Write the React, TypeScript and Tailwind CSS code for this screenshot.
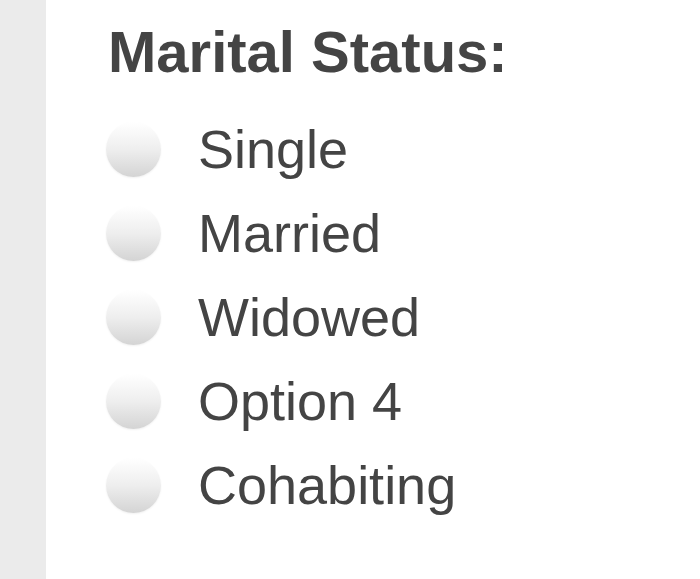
import React from 'react';

const options = ['Single', 'Married', 'Widowed', 'Option 4', 'Cohabiting'];

export default function App() {
  return (
    <div className="flex h-[579px] w-[700px] bg-white font-['Liberation_Sans',Arial,sans-serif] text-[#444]">
      <div className="w-[46px] shrink-0 bg-[#ebebeb]" />
      <div className="flex flex-col pl-[60px] pt-[23px]">
        <h2 className="ml-[2px] text-[58px] font-bold leading-none">Marital Status:</h2>
        <ul className="mt-[26px] flex flex-col">
          {options.map(o => (
            <li key={o} className="flex h-[84px] items-center">
              <span className="h-[55px] w-[55px] shrink-0 rounded-full bg-linear-to-b from-[#ffffff] via-[#eeeeee] to-[#d4d4d4] shadow-[0_1px_2px_rgba(0,0,0,0.06)]" />
              <span className="ml-[37px] text-[54px] leading-[84px]">{o}</span>
            </li>
          ))}
        </ul>
      </div>
    </div>
  );
}
